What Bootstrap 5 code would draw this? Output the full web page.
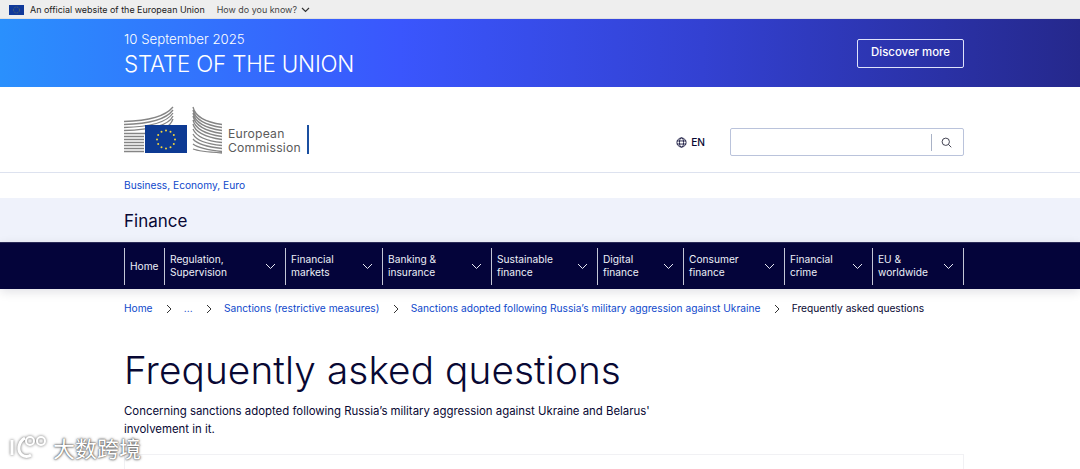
<!DOCTYPE html>
<html lang="en">
<head>
    <meta charset="utf-8">
    <title>Frequently asked questions</title>
    <link href="https://cdn.jsdelivr.net/npm/bootstrap@5.3.3/dist/css/bootstrap.min.css" rel="stylesheet">
    <style>
        html, body { height: 469px; overflow: hidden; }
        body { font-family: Inter, "Liberation Sans", sans-serif; color: #080833; position: relative; }
        a { text-decoration: none; color: #0e47cb; }
        .page-wrap { padding-left: 124px; padding-right: 116px; }
        .eu-bar { height: 19px; background: #eeeeee; padding: 1px 0 0 9px; font-size: 8.95px; color: #1a1a1a; border-bottom: 1px solid #e0e0e0; }
        .eu-flag { width: 15px; height: 10px; margin-right: 6px; }
        .eu-know { color: #444; margin-left: 12px; }
        .soteu { height: 68px; background: linear-gradient(90deg, #2a90fd 0%, #3a56fd 37%, #3341d2 65%, #25288c 100%); color: #fff; }
        .soteu-date { font-size: 13.25px; font-weight: 300; line-height: 17px; margin-top: 3px; }
        .soteu-title { font-size: 22.4px; font-weight: 300; line-height: 30px; margin-top: 1px; letter-spacing: -.2px; }
        .soteu-btn { width: 107px; height: 29px; border: 1.5px solid #dfe3fb; border-radius: 2px; color: #fff; font-size: 11.4px; font-weight: 500; }
        .site-head { height: 86px; border-bottom: 1px solid #dde2ef; padding-bottom: 18px; }
        .logo-words { font-size: 12.2px; line-height: 14px; color: #5b5b5b; font-weight: 400; letter-spacing: .2px; margin-left: 5px; padding: 2px 6px 0 0; border-right: 2.5px solid #1a4fa0; height: 29px; }
        .lang-link { font-size: 10.2px; font-weight: 500; color: #080833; margin-right: 25px; margin-bottom: 4px; }
        .search-box { width: 234px; height: 28px; border: 1px solid #bac3db; border-radius: 2px; margin-bottom: -2px; }
        .search-sep { width: 1px; height: 17px; background: #a9b2c6; margin-right: 9px; }
        .search-ico { margin-right: 11px; }
        .class-line { height: 25px; padding-top: 1px; font-size: 10.2px; }
        .site-strip { height: 44px; padding-top: 3px; background: #eff2fb; font-size: 17px; font-weight: 400; }
        .main-menu { height: 47px; background: #04043a; border-top: 1px solid #2b2b57; box-shadow: 0 3px 10px rgba(0, 0, 40, .12); position: relative; }
        .menu-item { height: 37px; border-left: 1px solid #c3c6d6; color: #eef0f8; font-size: 10.2px; line-height: 13px; padding-left: 5px; }
        .menu-item:last-child { width: 92px; border-right: 1px solid #c3c6d6; }
        .mi-home { width: 40px; } .mi-reg { width: 121px; } .mi-fin { width: 97px; } .mi-bank { width: 109px; }
        .mi-sus { width: 106px; } .mi-dig { width: 86px; } .mi-con { width: 101px; } .mi-cri { width: 88px; }
        .menu-chev { margin-left: auto; margin-right: 9px; }
        .crumbs { height: 38px; padding-top: 2px; font-size: 10.2px; }
        .crumb-sep { margin: 0 11px 0 13.3px; }
        .page-title { font-size: 38.75px; font-weight: 300; line-height: 46px; margin: 20px 0 9px; letter-spacing: .1px; }
        .intro-text { font-size: 11.4px; line-height: 18px; width: 560px; }
        .faq-box { height: 20px; border: 1px solid #f1f1f4; margin-top: 16px; }
        .watermark { position: absolute; left: 9px; top: 433px; color: #fff; font-family: "Noto Sans CJK SC", sans-serif; font-size: 22px; line-height: 28px; text-shadow: 0 0 3px #555, 0 0 2px #777, 0 0 1px #888; }
        .wm-mark { filter: drop-shadow(0 0 1.5px #666); }
    </style>
</head>
<body>

<div class="eu-bar d-flex align-items-center">
    <svg class="eu-flag" viewBox="0 0 15 10"><rect width="15" height="10" fill="#10399a"/><circle cx="7.5" cy="5" r="3" fill="none" stroke="#8a8f3a" stroke-width=".7" stroke-dasharray=".7 .9"/></svg>
    <span>An official website of the European Union</span>
    <span class="eu-know">How do you know?</span>
    <svg class="ms-1" width="9" height="6" viewBox="0 0 9 6"><path d="M1 1l3.500 3.500L8 1" fill="none" stroke="#333" stroke-width="1.2"/></svg>
</div>

<div class="soteu page-wrap d-flex justify-content-between align-items-center">
    <div>
        <div class="soteu-date">10 September 2025</div>
        <div class="soteu-title">STATE OF THE UNION</div>
    </div>
    <a class="soteu-btn d-flex align-items-center justify-content-center" href="#">Discover more</a>
</div>

<div class="site-head page-wrap d-flex align-items-end justify-content-between">
    <div class="d-flex align-items-end">
        <svg width="99" height="48" viewBox="0 0 99 48">
            <g fill="none" stroke="#858585" stroke-width="1.3">
                <path d="M0 15.500C20 15 40 12 49 1M0 18.500C20 18 41 15 49 4M0 21.500C20 21 42 18 49 7M0 24.500C20 24 44 21 49 10M0 27.500H20C30 27 45 24 49 13M0 30.500H20M0 33.500H20M0 36.500H20M0 39.500H20M0 42.500H20M0 45.500H20"/>
                <path d="M69 1C71 10 80 16 98 18.500M69 4C71 13 80 19 98 21.500M69 7C71 16 80 22 98 24.500M69 10C71 19 80 25 98 27.500M69 14C71 22 80 28 98 30.500M69 18C71 26 80 31 98 33.500M69 23C72 30 82 35 98 36.500M69 28C72 34 82 38 98 39.500M69 33C73 38 84 41 98 42.500M69 38C74 42 84 44 98 45.500M69 43C74 45 84 46 98 47"/>
            </g>
            <rect x="21" y="19" width="42" height="28" fill="#0d3a93"/>
            <g fill="#f3d53c">
                <circle cx="42" cy="24.500" r="1"/><circle cx="46.500" cy="25.700" r="1"/><circle cx="49.800" cy="29" r="1"/><circle cx="51" cy="33.500" r="1"/><circle cx="49.800" cy="38" r="1"/><circle cx="46.500" cy="41.300" r="1"/><circle cx="42" cy="42.500" r="1"/><circle cx="37.500" cy="41.300" r="1"/><circle cx="34.200" cy="38" r="1"/><circle cx="33" cy="33.500" r="1"/><circle cx="34.200" cy="29" r="1"/><circle cx="37.500" cy="25.700" r="1"/>
            </g>
        </svg>
        <div class="logo-words">European<br>Commission</div>
    </div>
    <div class="d-flex align-items-end">
        <a class="lang-link d-flex align-items-center gap-1" href="#">
            <svg width="11" height="11" viewBox="0 0 12 12" fill="none" stroke="#080833" stroke-width=".9"><circle cx="6" cy="6" r="5"/><ellipse cx="6" cy="6" rx="2.200" ry="5"/><path d="M1 4.300h10M1 7.700h10"/></svg>
            EN
        </a>
        <div class="search-box d-flex align-items-center justify-content-end">
            <span class="search-sep"></span>
            <svg class="search-ico" width="11" height="11" viewBox="0 0 12 12" fill="none" stroke="#334" stroke-width="1"><circle cx="5.200" cy="5.200" r="4"/><path d="M8.200 8.200l3 3"/></svg>
        </div>
    </div>
</div>

<div class="class-line page-wrap d-flex align-items-center"><a href="#">Business, Economy, Euro</a></div>

<div class="site-strip page-wrap d-flex align-items-center">Finance</div>

<nav class="main-menu page-wrap d-flex align-items-center">
    <div class="menu-item mi-home d-flex align-items-center">Home</div>
    <div class="menu-item mi-reg d-flex align-items-center"><span>Regulation,<br>Supervision</span><svg class="menu-chev" width="11" height="7" viewBox="0 0 11 7"><path d="M1 1l4.500 4.500L10 1" fill="none" stroke="#e6e8f2"/></svg></div>
    <div class="menu-item mi-fin d-flex align-items-center"><span>Financial<br>markets</span><svg class="menu-chev" width="11" height="7" viewBox="0 0 11 7"><path d="M1 1l4.500 4.500L10 1" fill="none" stroke="#e6e8f2"/></svg></div>
    <div class="menu-item mi-bank d-flex align-items-center"><span>Banking &amp;<br>insurance</span><svg class="menu-chev" width="11" height="7" viewBox="0 0 11 7"><path d="M1 1l4.500 4.500L10 1" fill="none" stroke="#e6e8f2"/></svg></div>
    <div class="menu-item mi-sus d-flex align-items-center"><span>Sustainable<br>finance</span><svg class="menu-chev" width="11" height="7" viewBox="0 0 11 7"><path d="M1 1l4.500 4.500L10 1" fill="none" stroke="#e6e8f2"/></svg></div>
    <div class="menu-item mi-dig d-flex align-items-center"><span>Digital<br>finance</span><svg class="menu-chev" width="11" height="7" viewBox="0 0 11 7"><path d="M1 1l4.500 4.500L10 1" fill="none" stroke="#e6e8f2"/></svg></div>
    <div class="menu-item mi-con d-flex align-items-center"><span>Consumer<br>finance</span><svg class="menu-chev" width="11" height="7" viewBox="0 0 11 7"><path d="M1 1l4.500 4.500L10 1" fill="none" stroke="#e6e8f2"/></svg></div>
    <div class="menu-item mi-cri d-flex align-items-center"><span>Financial<br>crime</span><svg class="menu-chev" width="11" height="7" viewBox="0 0 11 7"><path d="M1 1l4.500 4.500L10 1" fill="none" stroke="#e6e8f2"/></svg></div>
    <div class="menu-item d-flex align-items-center"><span>EU &amp;<br>worldwide</span><svg class="menu-chev" width="11" height="7" viewBox="0 0 11 7"><path d="M1 1l4.500 4.500L10 1" fill="none" stroke="#e6e8f2"/></svg></div>
</nav>

<div class="crumbs page-wrap d-flex align-items-center">
    <a href="#">Home</a>
    <svg class="crumb-sep" width="7" height="10" viewBox="0 0 7 10"><path d="M1 1l4 4-4 4" fill="none" stroke="#333"/></svg>
    <a href="#">...</a>
    <svg class="crumb-sep" width="7" height="10" viewBox="0 0 7 10"><path d="M1 1l4 4-4 4" fill="none" stroke="#333"/></svg>
    <a href="#">Sanctions (restrictive measures)</a>
    <svg class="crumb-sep" width="7" height="10" viewBox="0 0 7 10"><path d="M1 1l4 4-4 4" fill="none" stroke="#333"/></svg>
    <a href="#">Sanctions adopted following Russia’s military aggression against Ukraine</a>
    <svg class="crumb-sep" width="7" height="10" viewBox="0 0 7 10"><path d="M1 1l4 4-4 4" fill="none" stroke="#333"/></svg>
    <span>Frequently asked questions</span>
</div>

<div class="page-wrap">
    <h1 class="page-title">Frequently asked questions</h1>
    <p class="intro-text mb-0">Concerning sanctions adopted following Russia’s military aggression against Ukraine and Belarus' involvement in it.</p>
    <div class="faq-box"></div>
</div>

<div class="watermark d-flex align-items-center gap-1">
    <svg class="wm-mark" width="40" height="26" viewBox="0 0 40 26" fill="none" stroke="#fff" stroke-width="3"><path d="M3 6v15M16 4C9 8 8 17 13 21c3 2 6 2 9 0"/><circle cx="21" cy="7" r="4" stroke-width="2"/><circle cx="32" cy="7" r="4" stroke-width="2"/></svg>
    <span>大数跨境</span>
</div>

<script src="https://cdn.jsdelivr.net/npm/bootstrap@5.3.3/dist/js/bootstrap.bundle.min.js"></script>
</body>
</html>
